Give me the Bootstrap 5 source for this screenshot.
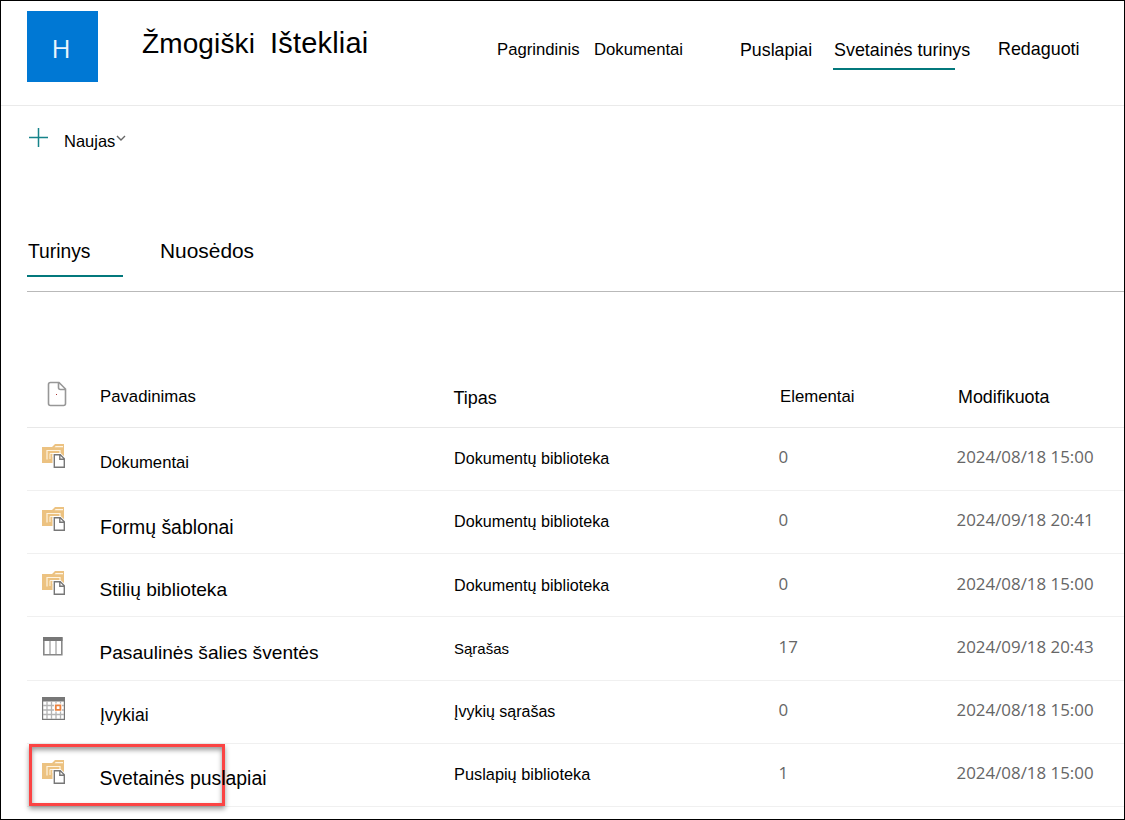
<!DOCTYPE html>
<html lang="lt">
<head>
<meta charset="utf-8">
<meta name="viewport" content="width=device-width, initial-scale=1">
<title>Žmogiški Ištekliai</title>
<link href="https://cdn.jsdelivr.net/npm/bootstrap@5.3.0/dist/css/bootstrap.min.css" rel="stylesheet">
<style>
body{font-family:"Liberation Sans",Arial,sans-serif;color:#000;background:#fff;line-height:24px;overflow:hidden}
.frame{height:820px;border:1px solid #000;overflow:hidden}
.site-head{height:105px;border-bottom:1px solid #eaeaea;padding-left:26px}
.logo{width:71px;height:71px;margin-top:10px;background:#0078d4;color:#eaf4fc;font:27px/74px "Open Sans",sans-serif;font-weight:400;padding-right:3px;font-size:26px}
.site-name{margin:24px 0 0 44px;width:355px;font-size:28px;line-height:36px;letter-spacing:.12px}
.site-name span{margin-left:15px;font-size:29px;letter-spacing:.2px}
.top-link{color:#000;text-decoration:none;font-size:16.7px;white-space:nowrap}
.link-1{margin-top:37px;width:97px}
.link-2{margin-top:37px;width:146px}
.link-3{margin-top:37px;width:94px;font-size:17.8px}
.link-4{margin-top:37px;width:164px;font-size:17.9px}
.link-4::after{content:"";display:block;width:122px;height:2px;background:#03787c;margin:6px 0 0 -1px}
.link-5{margin-top:36px;font-size:17.9px}
.commands{height:130px;padding-left:27px}
.plus{margin-top:21px}
.new-label{margin:23px 0 0 15px;font-size:16.5px}
.chev{margin:29px 0 0 1px}
.tabs{height:56px;margin-left:26px;border-bottom:1px solid #b9b9b9}
.tab-a{width:96px;height:41px;padding:4px 0 0 1px;font-size:19.3px;border-bottom:2px solid #03787c}
.tab-b{padding:3px 0 0 37px;font-size:20.9px}
.files{margin:71px 0 0 26px}
.file-row{display:grid;grid-template-columns:73px 354px 325px 178px 1fr;height:63px;border-bottom:1px solid #f0f0f0;position:relative;align-items:start;white-space:nowrap}
.file-row.tall{height:64px}
.file-row.titles{height:65px;border-color:#e8e8e8}
.head-ico{margin:18px 0 0 20px}
.ico{margin:16px 0 0 15px;display:block;z-index:1}
.low{margin-top:17px}
.list-ico{margin:20px 0 0 16px}
.nm{font-size:19.15px;padding-top:24px;z-index:1;margin-left:-.6px}
.nm-s{font-size:16.7px;padding-top:23px;margin-left:0}
.nm-w{font-size:19.4px;margin-left:0}
.nm-e{font-size:17.5px;padding-top:22px;margin-left:0}
.nm-p{font-size:19.4px;padding-top:22px}
.tp{font-size:16.15px;padding-top:18px}
.tp-low{padding-top:19px}
.tp-s{font-size:15px;padding-top:20px}
.tp-e{font-size:16px;padding-top:19px}
.tp-p{font-size:16.35px}
.nr{font-family:"Open Sans",sans-serif;font-size:16.9px;color:#666;padding-top:17px;margin-left:-.5px}
.nr-low{padding-top:18px}
.hd{font-size:16.75px;padding-top:22px}
.hd-el{margin-left:1px}
.hd-b{font-size:18px;padding-top:23px}
.hd-t{margin-left:-.5px}
.hd-m{margin-left:1px;padding-top:22px;font-size:17.9px}
.marker{position:absolute;left:2px;top:0;width:196px;height:62px;border:3px solid #fb4444;box-shadow:0 3px 5px rgba(0,0,0,.4),inset 0 3px 5px rgba(0,0,0,.4)}
</style>
</head>
<body>
<svg width="0" height="0" class="position-absolute" aria-hidden="true">
<symbol id="folder" viewBox="0 0 24 25">
<path d="M0 3h10l3-3h9v19H0z" fill="#ecc281"/>
<path d="M12.5 3.2h8.5V2h-7.3z" fill="#fff6e6"/>
<path d="M5 15.5V6.5H18V10" fill="none" stroke="#fff4e0" stroke-width="1.2"/>
<path d="M8 15V9.5h5" fill="none" stroke="#fff4e0"/>
<path d="M10 12h2" stroke="#fff4e0"/>
<path d="M10.5 9h8l5.5 5v11H10.5z" fill="#fff"/>
<path d="M12.3 10.8h6l4 4v8.5h-10zM17.8 11v4.3h4.5" fill="#fff" stroke="#777" stroke-width="1.4"/>
</symbol>
</svg>
<div class="frame">
<header class="site-head d-flex align-items-start">
<div class="logo text-center">H</div>
<div class="site-name text-nowrap">Žmogiški<span>Ištekliai</span></div>
<nav class="d-flex align-items-start">
<a class="top-link link-1">Pagrindinis</a>
<a class="top-link link-2">Dokumentai</a>
<a class="top-link link-3">Puslapiai</a>
<a class="top-link link-4">Svetainės turinys</a>
<a class="top-link link-5">Redaguoti</a>
</nav>
</header>
<div class="commands d-flex align-items-start">
<svg class="plus" width="21" height="21"><path d="M1 10.5h19M10.5 1v19" stroke="#16838a" stroke-width="1.5"/></svg>
<div class="new-label">Naujas</div>
<svg class="chev" width="10" height="7"><path d="M1 1l4 4 4-4" fill="none" stroke="#666" stroke-width="1.4"/></svg>
</div>
<div class="tabs d-flex align-items-start">
<div class="tab-a">Turinys</div><div class="tab-b">Nuosėdos</div>
</div>
<main class="files">
<div class="file-row titles">
<svg class="head-ico" width="20" height="26"><path d="M3.5 1.5h8.5l6.5 6.5v14.5q0 2-2 2h-13q-2 0-2-2v-19q0-2 2-2zM11.5 1.5v5q0 2 2 2h5" fill="none" stroke="#979797" stroke-width="1.6"/><path d="M9 13h1v1H9z" fill="#a33"/></svg>
<div class="hd">Pavadinimas</div><div class="hd hd-b hd-t">Tipas</div><div class="hd hd-el">Elementai</div><div class="hd hd-b hd-m">Modifikuota</div>
</div>
<div class="file-row"><svg class="ico" width="24" height="25"><use href="#folder"/></svg><div class="nm nm-s">Dokumentai</div><div class="tp">Dokumentų biblioteka</div><div class="nr">0</div><div class="nr">2024/08/18 15:00</div></div>
<div class="file-row"><svg class="ico" width="24" height="25"><use href="#folder"/></svg><div class="nm nm-w">Formų šablonai</div><div class="tp">Dokumentų biblioteka</div><div class="nr">0</div><div class="nr">2024/09/18 20:41</div></div>
<div class="file-row"><svg class="ico low" width="24" height="25"><use href="#folder"/></svg><div class="nm">Stilių biblioteka</div><div class="tp tp-low">Dokumentų biblioteka</div><div class="nr nr-low">0</div><div class="nr nr-low">2024/08/18 15:00</div></div>
<div class="file-row tall"><svg class="ico list-ico" width="20" height="19"><path d="M.8 1h18v16.8H.8z" fill="#fff" stroke="#888" stroke-width="1.6"/><path d="M0 0h19.5v4H0z" fill="#777"/><path d="M7 4v13M13 4v13" stroke="#aaa" stroke-width="1.4"/></svg><div class="nm">Pasaulinės šalies šventės</div><div class="tp tp-s">Sąrašas</div><div class="nr nr-low">17</div><div class="nr nr-low">2024/09/18 20:43</div></div>
<div class="file-row"><svg class="ico" width="23" height="23"><path d="M.6 1h21.8v21.3H.6z" fill="#fff" stroke="#777" stroke-width="1.2"/><path d="M0 0h23v4.5H0z" fill="#777"/><path d="M5 4v18M9.5 4v18M14 4v18M18.5 4v18M1 8.5h21M1 13h21M1 17.5h21" stroke="#b4b4b4" stroke-width="1.3"/><path d="M12 6.5h8v8h-8z" fill="#fff"/><path d="M13.8 8.3h4.6v4.6h-4.6z" fill="#fff" stroke="#ea8240" stroke-width="1.8"/></svg><div class="nm nm-e">Įvykiai</div><div class="tp tp-e">Įvykių sąrašas</div><div class="nr">0</div><div class="nr">2024/08/18 15:00</div></div>
<div class="file-row"><div class="marker"></div><svg class="ico" width="24" height="25"><use href="#folder"/></svg><div class="nm nm-p">Svetainės puslapiai</div><div class="tp tp-p">Puslapių biblioteka</div><div class="nr">1</div><div class="nr">2024/08/18 15:00</div></div>
</main>
</div>
<script src="https://cdn.jsdelivr.net/npm/bootstrap@5.3.0/dist/js/bootstrap.bundle.min.js"></script>
</body>
</html>
